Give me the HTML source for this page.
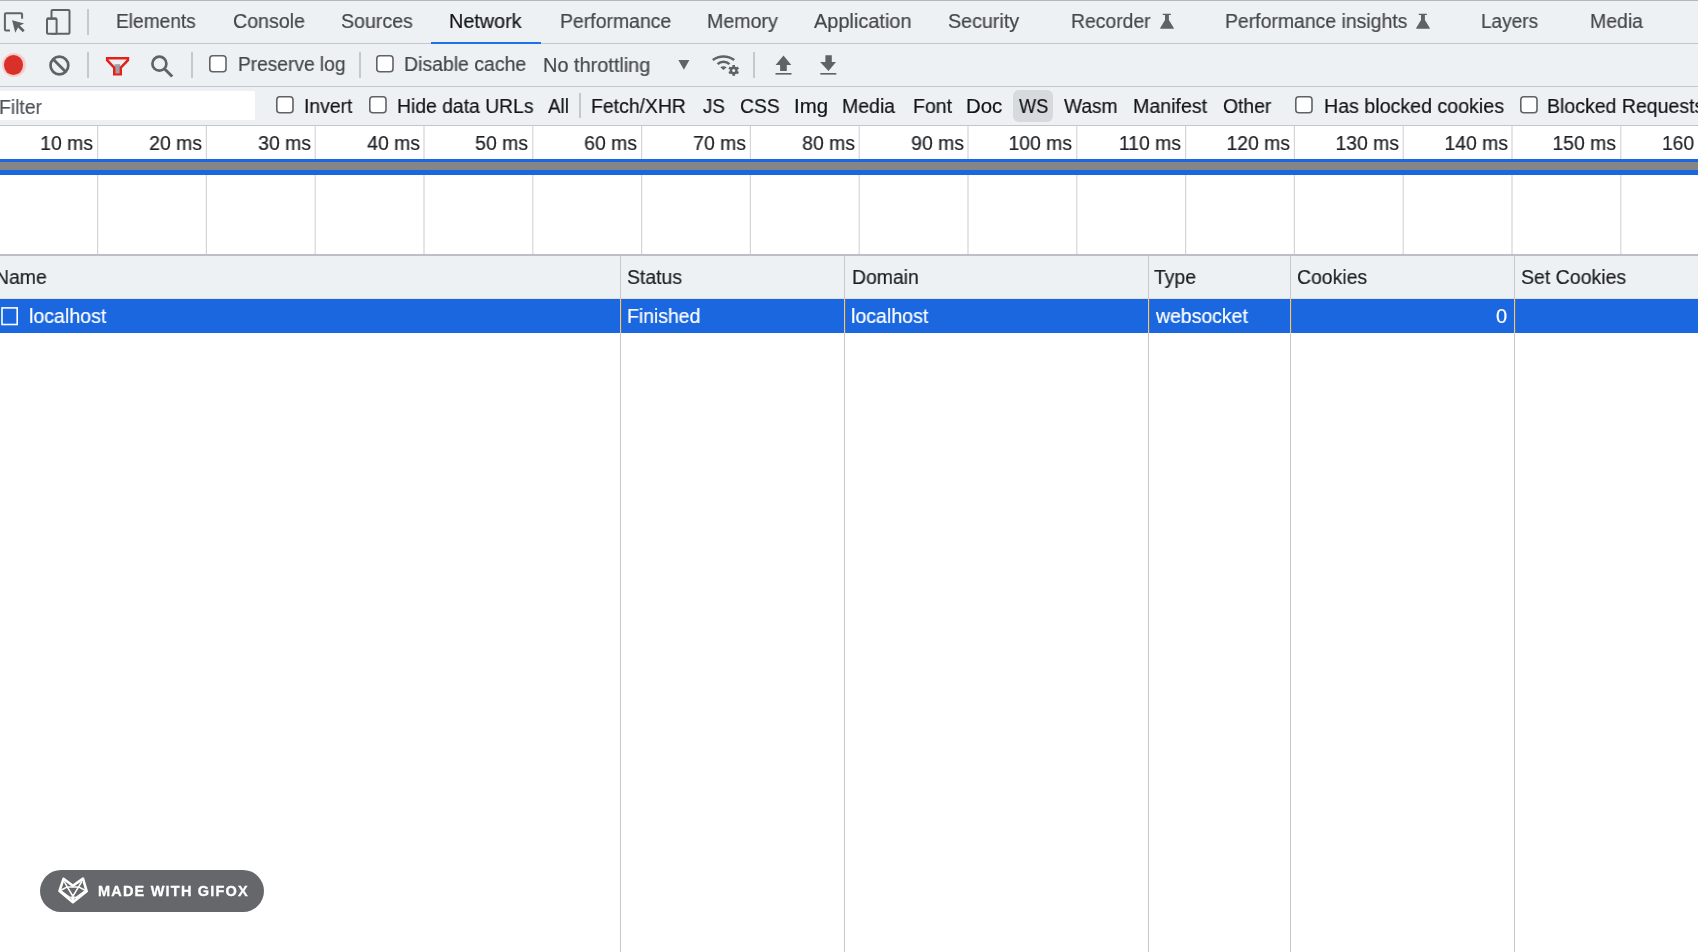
<!DOCTYPE html>
<html><head><meta charset="utf-8">
<style>
*{margin:0;padding:0;box-sizing:border-box}
html,body{width:1698px;height:952px;overflow:hidden;background:#fff;font-family:"Liberation Sans",sans-serif;font-size:20px}
.a{position:absolute}
.t{position:absolute;white-space:nowrap;line-height:20px;font-size:20px;transform-origin:0 0;will-change:transform;-webkit-text-stroke:0.2px currentColor}
.bar{position:absolute;left:0;width:1698px}
.vsep{position:absolute;width:2px;background:#c5c8cd}
.gl{position:absolute;width:1px;background:#dcdde0}
.cl{position:absolute;width:1px;background:#c6c9ce}
</style></head><body>

<div class="bar" style="top:0;height:44px;background:#eef1f3;border-top:1px solid #b4b6ba;border-bottom:1px solid #c3c6cc"></div>
<svg class="a" style="left:0;top:8px" width="30" height="30" viewBox="0 0 30 30">
 <path d="M10 22.5 H6 Q4.9 22.5 4.9 21.4 V6.3 Q4.9 5.2 6 5.2 H21 Q22.1 5.2 22.1 6.3 V10.8" fill="none" stroke="#5f6368" stroke-width="2"/>
 <path d="M12.1 12.3 L24.1 15.6 L19.9 17.5 L24.7 22.3 L22.8 24.2 L18 19.4 L15.3 24.8 Z" fill="#5f6368"/>
</svg>
<svg class="a" style="left:44px;top:6px" width="30" height="32" viewBox="0 0 30 32">
 <rect x="7.5" y="4" width="18" height="23.8" rx="1" fill="none" stroke="#5f6368" stroke-width="2"/>
 <rect x="3" y="12.4" width="9.6" height="15.4" rx="1" fill="#eef1f3" stroke="#5f6368" stroke-width="2"/>
 <rect x="3" y="11.6" width="9.6" height="2.2" fill="#5f6368"/>
</svg>
<div class="vsep" style="left:87px;top:9px;height:26px"></div>
<div class="t" style="left:116.23px;top:11px;color:#44474c;transform:scaleX(0.9573)">Elements</div>
<div class="t" style="left:233.05px;top:11px;color:#44474c;transform:scaleX(0.9806)">Console</div>
<div class="t" style="left:340.90px;top:11px;color:#44474c;transform:scaleX(0.9800)">Sources</div>
<div class="t" style="left:448.92px;top:11px;color:#121418;transform:scaleX(0.9903)">Network</div>
<div class="t" style="left:559.59px;top:11px;color:#44474c;transform:scaleX(0.9722)">Performance</div>
<div class="t" style="left:706.62px;top:11px;color:#44474c;transform:scaleX(0.9795)">Memory</div>
<div class="t" style="left:814.14px;top:11px;color:#44474c;transform:scaleX(0.9964)">Application</div>
<div class="t" style="left:948.10px;top:11px;color:#44474c;transform:scaleX(0.9842)">Security</div>
<div class="t" style="left:1071.37px;top:11px;color:#44474c;transform:scaleX(0.9681)">Recorder</div>
<div class="t" style="left:1224.88px;top:11px;color:#44474c;transform:scaleX(0.9710)">Performance insights</div>
<div class="t" style="left:1480.87px;top:11px;color:#44474c;transform:scaleX(0.9518)">Layers</div>
<div class="t" style="left:1589.77px;top:11px;color:#44474c;transform:scaleX(0.9728)">Media</div>
<svg class="a" style="left:1158px;top:13px" width="17" height="17" viewBox="0 0 17 17"><path d="M4.7 0.7 H12.9 V2 H10.9 V7 L15.8 14.9 Q16.1 15.8 15.1 15.8 H2.9 Q1.9 15.8 2.2 14.9 L7 7 V2 H4.7 Z" fill="#5f6368"/></svg>
<svg class="a" style="left:1414px;top:13px" width="17" height="17" viewBox="0 0 17 17"><path d="M4.7 0.7 H12.9 V2 H10.9 V7 L15.8 14.9 Q16.1 15.8 15.1 15.8 H2.9 Q1.9 15.8 2.2 14.9 L7 7 V2 H4.7 Z" fill="#5f6368"/></svg>
<div class="a" style="left:431px;top:42px;width:110px;height:2px;background:#1a73e8"></div>
<div class="bar" style="top:44px;height:43px;background:#eef1f3;border-bottom:1px solid #c3c6cc"></div>
<div class="a" style="left:1.7px;top:53px;width:24px;height:24px;border-radius:50%;background:#f5cdc9"></div>
<div class="a" style="left:3.8px;top:55px;width:19.6px;height:19.6px;border-radius:50%;background:#d9302a"></div>
<svg class="a" style="left:48px;top:54px" width="24" height="24" viewBox="0 0 24 24">
 <circle cx="11.4" cy="11.5" r="8.9" fill="none" stroke="#5f6368" stroke-width="2.7"/>
 <path d="M5.2 5.3 L17.6 17.7" stroke="#5f6368" stroke-width="2.8"/>
</svg>
<div class="vsep" style="left:87px;top:52px;height:26px"></div>
<svg class="a" style="left:104px;top:55px" width="27" height="22" viewBox="0 0 27 22">
 <path d="M10.6 9.2 H16.2 V18.2 H10.6 Z" fill="#9aa0a6"/>
 <path d="M3.1 3.3 H24 V5.2 L16.8 12.6 V19.4 H10.2 V12.6 L3.1 5.2 Z" fill="none" stroke="#e3211c" stroke-width="2.4" stroke-linejoin="miter"/>
</svg>
<svg class="a" style="left:148px;top:52px" width="28" height="28" viewBox="0 0 28 28">
 <circle cx="11.4" cy="11.7" r="7" fill="none" stroke="#5f6368" stroke-width="2.7"/>
 <path d="M16.4 16.7 L24.2 24.5" stroke="#5f6368" stroke-width="3"/>
</svg>
<div class="vsep" style="left:191px;top:52px;height:26px"></div>
<svg class="a" style="left:209px;top:55px" width="18" height="18" viewBox="0 0 18 18"><rect x="0.8" y="0.8" width="16.2" height="16" rx="3" fill="#fff" stroke="#5f6368" stroke-width="1.6"/></svg>
<div class="t" style="left:237.87px;top:54px;color:#44474c;transform:scaleX(0.9571)">Preserve log</div>
<div class="vsep" style="left:359px;top:52px;height:26px"></div>
<svg class="a" style="left:376px;top:55px" width="18" height="18" viewBox="0 0 18 18"><rect x="0.8" y="0.8" width="16.2" height="16" rx="3" fill="#fff" stroke="#5f6368" stroke-width="1.6"/></svg>
<div class="t" style="left:403.86px;top:54px;color:#44474c;transform:scaleX(0.9724)">Disable cache</div>
<div class="t" style="left:542.73px;top:55px;color:#44474c;transform:scaleX(0.9950)">No throttling</div>
<svg class="a" style="left:677px;top:59px" width="14" height="12" viewBox="0 0 14 12"><path d="M1.4 1 H12.4 L6.9 10.8 Z" fill="#5f6368"/></svg>
<svg class="a" style="left:710px;top:53px" width="32" height="24" viewBox="0 0 32 24">
 <path d="M2.8 7 A18 18 0 0 1 24.2 7" fill="none" stroke="#5f6368" stroke-width="2.6"/>
 <path d="M7.6 11.2 A8.3 8.3 0 0 1 19.4 11.2" fill="none" stroke="#5f6368" stroke-width="2.6"/>
 <path d="M10.3 14.3 Q13.5 12.2 16.7 14.3 L13.5 17 Z" fill="#5f6368"/>
 <g transform="translate(23.7 17.4)" fill="#5f6368">
  <circle r="3.9"/>
  <rect x="-1.3" y="-5.4" width="2.6" height="10.8"/>
  <rect x="-1.3" y="-5.4" width="2.6" height="10.8" transform="rotate(60)"/>
  <rect x="-1.3" y="-5.4" width="2.6" height="10.8" transform="rotate(120)"/>
  <circle r="1.5" fill="#eef1f3"/>
 </g>
</svg>
<div class="vsep" style="left:753px;top:52px;height:26px"></div>
<svg class="a" style="left:774px;top:55px" width="19" height="21" viewBox="0 0 19 21">
 <path d="M9.5 0.4 L17.3 10 H12.8 V16 H6.1 V10 H1.6 Z" fill="#5f6368"/>
 <rect x="1.5" y="18" width="16" height="1.6" fill="#5f6368"/>
</svg>
<svg class="a" style="left:819px;top:55px" width="19" height="21" viewBox="0 0 19 21">
 <path d="M6.4 0.2 H12.8 V7 H17 L9.5 16 L1.1 7 H6.4 Z" fill="#5f6368"/>
 <rect x="1.3" y="18" width="16" height="1.6" fill="#5f6368"/>
</svg>
<div class="bar" style="top:87px;height:39px;background:#eef1f3;border-bottom:1px solid #c3c6cc"></div>
<div class="a" style="left:0;top:91px;width:255px;height:29px;background:#fff"></div>
<div class="t" style="left:-1.03px;top:97px;color:#4f5257;transform:scaleX(0.9664)">Filter</div>
<svg class="a" style="left:276px;top:96px" width="18" height="18" viewBox="0 0 18 18"><rect x="0.8" y="0.8" width="16.2" height="16" rx="3" fill="#fff" stroke="#5f6368" stroke-width="1.6"/></svg>
<div class="t" style="left:304.25px;top:95.5px;color:#121418;transform:scaleX(0.9663)">Invert</div>
<svg class="a" style="left:369px;top:96px" width="18" height="18" viewBox="0 0 18 18"><rect x="0.8" y="0.8" width="16.2" height="16" rx="3" fill="#fff" stroke="#5f6368" stroke-width="1.6"/></svg>
<div class="t" style="left:396.67px;top:95.5px;color:#121418;transform:scaleX(0.9669)">Hide data URLs</div>
<div class="t" style="left:548.00px;top:95.5px;color:#121418;transform:scaleX(0.9429)">All</div>
<div class="vsep" style="left:579px;top:93px;height:25px"></div>
<div class="a" style="left:1013px;top:90px;width:40px;height:32px;border-radius:6px;background:#d6d9dd"></div>
<div class="t" style="left:591.26px;top:95.5px;color:#121418;transform:scaleX(0.9705)">Fetch/XHR</div>
<div class="t" style="left:702.50px;top:95.5px;color:#121418;transform:scaleX(0.9348)">JS</div>
<div class="t" style="left:739.84px;top:95.5px;color:#121418;transform:scaleX(0.9641)">CSS</div>
<div class="t" style="left:793.96px;top:95.5px;color:#121418;transform:scaleX(1.0200)">Img</div>
<div class="t" style="left:842.45px;top:95.5px;color:#121418;transform:scaleX(0.9736)">Media</div>
<div class="t" style="left:912.58px;top:95.5px;color:#121418;transform:scaleX(0.9758)">Font</div>
<div class="t" style="left:965.56px;top:95.5px;color:#121418;transform:scaleX(1.0212)">Doc</div>
<div class="t" style="left:1018.50px;top:95.5px;color:#121418;transform:scaleX(0.9062)">WS</div>
<div class="t" style="left:1064.40px;top:95.5px;color:#121418;transform:scaleX(0.9564)">Wasm</div>
<div class="t" style="left:1132.54px;top:95.5px;color:#121418;transform:scaleX(0.9797)">Manifest</div>
<div class="t" style="left:1222.63px;top:95.5px;color:#121418;transform:scaleX(0.9673)">Other</div>
<svg class="a" style="left:1295px;top:96px" width="18" height="18" viewBox="0 0 18 18"><rect x="0.8" y="0.8" width="16.2" height="16" rx="3" fill="#fff" stroke="#5f6368" stroke-width="1.6"/></svg>
<div class="t" style="left:1323.70px;top:95.5px;color:#121418;transform:scaleX(0.9815)">Has blocked cookies</div>
<svg class="a" style="left:1520px;top:96px" width="18" height="18" viewBox="0 0 18 18"><rect x="0.8" y="0.8" width="16.2" height="16" rx="3" fill="#fff" stroke="#5f6368" stroke-width="1.6"/></svg>
<div class="t" style="left:1547.00px;top:95.5px;color:#121418;transform:scaleX(0.9750)">Blocked Requests</div>
<div class="bar" style="top:126px;height:128px;background:#fff"></div>
<svg class="a" style="left:0;top:126px" width="1698" height="128" viewBox="0 0 1698 128"><rect x="97.00" y="0" width="1.2" height="128" fill="#d3d5d9"/><rect x="205.80" y="0" width="1.2" height="128" fill="#d3d5d9"/><rect x="314.60" y="0" width="1.2" height="128" fill="#d3d5d9"/><rect x="423.40" y="0" width="1.2" height="128" fill="#d3d5d9"/><rect x="532.20" y="0" width="1.2" height="128" fill="#d3d5d9"/><rect x="641.00" y="0" width="1.2" height="128" fill="#d3d5d9"/><rect x="749.80" y="0" width="1.2" height="128" fill="#d3d5d9"/><rect x="858.60" y="0" width="1.2" height="128" fill="#d3d5d9"/><rect x="967.40" y="0" width="1.2" height="128" fill="#d3d5d9"/><rect x="1076.20" y="0" width="1.2" height="128" fill="#d3d5d9"/><rect x="1185.00" y="0" width="1.2" height="128" fill="#d3d5d9"/><rect x="1293.80" y="0" width="1.2" height="128" fill="#d3d5d9"/><rect x="1402.60" y="0" width="1.2" height="128" fill="#d3d5d9"/><rect x="1511.40" y="0" width="1.2" height="128" fill="#d3d5d9"/><rect x="1620.20" y="0" width="1.2" height="128" fill="#d3d5d9"/></svg>
<div class="t" style="left:-206.80px;width:300px;text-align:right;top:133px;color:#1c1f23;transform:scaleX(0.97);transform-origin:100% 0">10 ms</div>
<div class="t" style="left:-98.00px;width:300px;text-align:right;top:133px;color:#1c1f23;transform:scaleX(0.97);transform-origin:100% 0">20 ms</div>
<div class="t" style="left:10.80px;width:300px;text-align:right;top:133px;color:#1c1f23;transform:scaleX(0.97);transform-origin:100% 0">30 ms</div>
<div class="t" style="left:119.60px;width:300px;text-align:right;top:133px;color:#1c1f23;transform:scaleX(0.97);transform-origin:100% 0">40 ms</div>
<div class="t" style="left:228.40px;width:300px;text-align:right;top:133px;color:#1c1f23;transform:scaleX(0.97);transform-origin:100% 0">50 ms</div>
<div class="t" style="left:337.20px;width:300px;text-align:right;top:133px;color:#1c1f23;transform:scaleX(0.97);transform-origin:100% 0">60 ms</div>
<div class="t" style="left:446.00px;width:300px;text-align:right;top:133px;color:#1c1f23;transform:scaleX(0.97);transform-origin:100% 0">70 ms</div>
<div class="t" style="left:554.80px;width:300px;text-align:right;top:133px;color:#1c1f23;transform:scaleX(0.97);transform-origin:100% 0">80 ms</div>
<div class="t" style="left:663.60px;width:300px;text-align:right;top:133px;color:#1c1f23;transform:scaleX(0.97);transform-origin:100% 0">90 ms</div>
<div class="t" style="left:772.40px;width:300px;text-align:right;top:133px;color:#1c1f23;transform:scaleX(0.97);transform-origin:100% 0">100 ms</div>
<div class="t" style="left:881.20px;width:300px;text-align:right;top:133px;color:#1c1f23;transform:scaleX(0.97);transform-origin:100% 0">110 ms</div>
<div class="t" style="left:990.00px;width:300px;text-align:right;top:133px;color:#1c1f23;transform:scaleX(0.97);transform-origin:100% 0">120 ms</div>
<div class="t" style="left:1098.80px;width:300px;text-align:right;top:133px;color:#1c1f23;transform:scaleX(0.97);transform-origin:100% 0">130 ms</div>
<div class="t" style="left:1207.60px;width:300px;text-align:right;top:133px;color:#1c1f23;transform:scaleX(0.97);transform-origin:100% 0">140 ms</div>
<div class="t" style="left:1316.40px;width:300px;text-align:right;top:133px;color:#1c1f23;transform:scaleX(0.97);transform-origin:100% 0">150 ms</div>
<div class="t" style="left:1662.04px;top:133px;color:#1c1f23;transform:scaleX(0.9625)">160</div>
<div class="bar" style="top:159px;height:3px;background:#1a67e0"></div>
<div class="bar" style="top:162px;height:8px;background:#858585"></div>
<div class="bar" style="top:170px;height:5px;background:#1a67e0"></div>
<div class="bar" style="top:254px;height:2px;background:#bcbfc6"></div>
<div class="bar" style="top:256px;height:43px;background:#eef1f3;border-bottom:1px solid #e2e0dc"></div>
<div class="t" style="left:-5px;top:267px;color:#1c1f23;transform:scaleX(0.97)">Name</div>
<div class="t" style="left:626.90px;top:267px;color:#1c1f23;transform:scaleX(0.9700)">Status</div>
<div class="t" style="left:851.60px;top:267px;color:#1c1f23;transform:scaleX(0.9700)">Domain</div>
<div class="t" style="left:1154.20px;top:267px;color:#1c1f23;transform:scaleX(0.9700)">Type</div>
<div class="t" style="left:1296.60px;top:267px;color:#1c1f23;transform:scaleX(0.9700)">Cookies</div>
<div class="t" style="left:1520.72px;top:267px;color:#1c1f23;transform:scaleX(0.9755)">Set Cookies</div>
<div class="bar" style="top:299px;height:34px;background:#1a67e0"></div>
<svg class="a" style="left:0;top:306px" width="20" height="20" viewBox="0 0 20 20"><rect x="2" y="1.9" width="15.2" height="16.6" fill="none" stroke="#fff" stroke-width="1.6"/></svg>
<div class="t" style="left:28.52px;top:306px;color:#fff;transform:scaleX(0.9782)">localhost</div>
<div class="t" style="left:626.90px;top:306px;color:#fff;transform:scaleX(0.9700)">Finished</div>
<div class="t" style="left:851.10px;top:306px;color:#fff;transform:scaleX(0.9780)">localhost</div>
<div class="t" style="left:1155.70px;top:306px;color:#fff;transform:scaleX(0.9716)">websocket</div>
<div class="t" style="left:1495.90px;top:306px;color:#fff;transform:scaleX(1.0000)">0</div>
<div class="cl" style="left:620px;top:256px;height:696px"></div>
<div class="a" style="left:621px;top:299px;width:1px;height:34px;background:#6f6a60"></div>
<div class="cl" style="left:844px;top:256px;height:696px"></div>
<div class="a" style="left:845px;top:299px;width:1px;height:34px;background:#6f6a60"></div>
<div class="cl" style="left:1148px;top:256px;height:696px"></div>
<div class="a" style="left:1149px;top:299px;width:1px;height:34px;background:#6f6a60"></div>
<div class="cl" style="left:1290px;top:256px;height:696px"></div>
<div class="a" style="left:1291px;top:299px;width:1px;height:34px;background:#6f6a60"></div>
<div class="cl" style="left:1514px;top:256px;height:696px"></div>
<div class="a" style="left:1515px;top:299px;width:1px;height:34px;background:#6f6a60"></div>
<div class="a" style="left:40px;top:870px;width:224px;height:41.5px;border-radius:21px;background:#66676b"></div>
<svg class="a" style="left:54px;top:872px" width="40" height="36" viewBox="0 0 40 36">
 <path d="M9.5 6.8 L18.9 13.8 L29 6.6 L32.7 19.3 L18.9 30.2 L5.5 18.9 Z" fill="none" stroke="#fff" stroke-width="2.6" stroke-linejoin="round"/>
 <path d="M10.2 9.5 L13.2 14.9 L18.9 24.2 L24.6 14.9 L27.8 9.5 M13.2 14.9 H24.6 M6.5 18.5 L13.2 14.9 M31.5 18.5 L24.6 14.9 M6.5 18.5 L16.6 26.1 M31.5 18.5 L21.2 26.1" fill="none" stroke="#fff" stroke-width="1.5"/>
 <path d="M16.3 24.5 L21.5 24.5 L18.9 30.5 Z" fill="#fff"/>
</svg>
<div class="t" style="left:98px;top:881px;color:#fff;font-weight:bold;font-size:14.5px;letter-spacing:1.2px;-webkit-text-stroke:0.3px #fff">MADE WITH GIFOX</div>
</body></html>
